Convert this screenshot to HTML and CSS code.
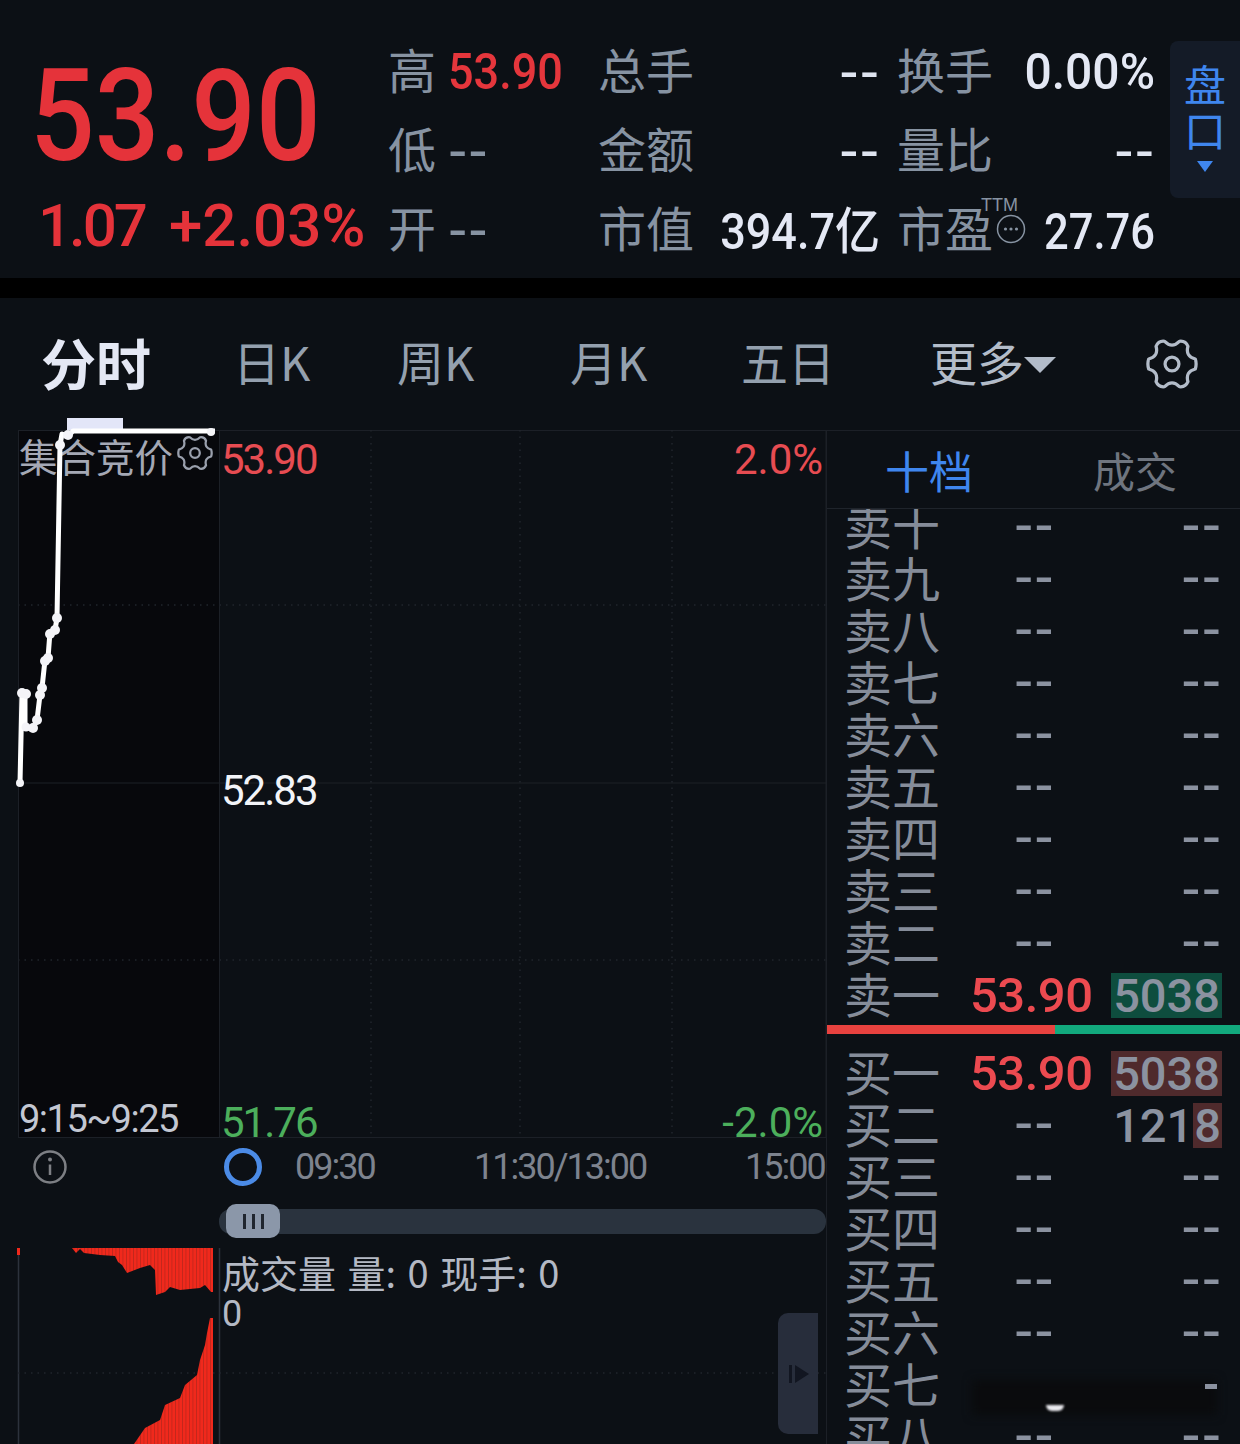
FILE: index.html
```html
<!DOCTYPE html>
<html lang="zh">
<head>
<meta charset="utf-8">
<title>53.90</title>
<link rel="stylesheet" href="styles.css">
</head>
<body>
<div class="page">
  <header class="quote">
    <div class="price">
      <div class="last">53.90</div>
      <div class="change"><span class="chg">1.07</span><span>+2.03%</span></div>
    </div>
    <div class="stats">
      <span class="k">高</span><span class="v sq red">53.90</span>
      <span class="k">总手</span><span class="v r"><span class="dash">--</span></span>
      <span class="k k3">换手</span><span class="v r sq2">0.00%</span>
      <span class="k">低</span><span class="v"><span class="dash grey">--</span></span>
      <span class="k">金额</span><span class="v r"><span class="dash">--</span></span>
      <span class="k k3">量比</span><span class="v r"><span class="dash">--</span></span>
      <span class="k">开</span><span class="v"><span class="dash grey">--</span></span>
      <span class="k">市值</span><span class="v r sq low">394.7亿</span>
      <span class="k k3 pe">市盈<small class="ttm">TTM</small>
        <svg class="more" viewBox="0 0 30 30"><circle cx="15" cy="15" r="13.5"/><circle class="d" cx="9.5" cy="15" r="1.6"/><circle class="d" cx="15" cy="15" r="1.6"/><circle class="d" cx="20.500" cy="15" r="1.6"/></svg>
      </span><span class="v r sq3 low">27.76</span>
    </div>
    <div class="pan">
      <span>盘</span><span>口</span><i class="caret"></i>
    </div>
  </header>
  <div class="gap"></div>
  <nav class="tabs">
    <span class="tab on">分时</span>
    <span class="tab t2">日K</span>
    <span class="tab t3">周K</span>
    <span class="tab t4">月K</span>
    <span class="tab t5">五日</span>
    <span class="tab t6">更多<i class="tcaret"></i></span>
    <svg class="gear big" viewBox="0 0 24 24"><path d="M15.400 1.540Q18.250 1.180 19.360 3.830Q18.060 8.500 22.760 9.710Q23.500 12 22.760 14.290Q18.060 15.500 19.360 20.170Q18.250 22.820 15.400 22.460Q12 19 8.600 22.460Q5.750 22.820 4.640 20.170Q5.940 15.500 1.240 14.290Q.5 12 1.240 9.710Q5.940 8.500 4.640 3.830Q5.750 1.180 8.600 1.540Q12 5 15.400 1.540Z"/><circle cx="12" cy="12" r="3.200"/></svg>
  </nav>
  <main class="main">
    <section class="left">
      <div class="chart">
        <div class="auction"></div>
        <svg class="grid" viewBox="0 0 826 708">
          <line class="g" x1="18" y1="0.500" x2="826" y2="0.500"/>
          <line class="gd" x1="18" y1="175" x2="826" y2="175"/>
          <line class="g" x1="18" y1="353" x2="826" y2="353"/>
          <line class="gd" x1="18" y1="530" x2="826" y2="530"/>
          <line class="g" x1="18" y1="707.500" x2="826" y2="707.500"/>
          <line class="g" x1="18.500" y1="0" x2="18.500" y2="708"/>
          <line class="g" x1="219.500" y1="0" x2="219.500" y2="708"/>
          <line class="gd" x1="371" y1="0" x2="371" y2="708"/>
          <line class="gd" x1="520" y1="0" x2="520" y2="708"/>
          <line class="gd" x1="672" y1="0" x2="672" y2="708"/>
          <line class="g" x1="826" y1="0" x2="826" y2="708"/>
        </svg>
        <div class="blip"></div>
        <span class="lbl auct">集合竞价<svg class="gear small" viewBox="0 0 24 24"><path d="M15.400 1.540Q18.250 1.180 19.360 3.830Q18.060 8.500 22.760 9.710Q23.500 12 22.760 14.290Q18.060 15.500 19.360 20.170Q18.250 22.820 15.400 22.460Q12 19 8.600 22.460Q5.750 22.820 4.640 20.170Q5.940 15.500 1.240 14.290Q.5 12 1.240 9.710Q5.940 8.500 4.640 3.830Q5.750 1.180 8.600 1.540Q12 5 15.400 1.540Z"/><circle cx="12" cy="12" r="3.200"/></svg></span>
        <svg class="line" viewBox="0 0 826 708">
          <polyline points="20,353 22,263 25,263 25,298 33,298 37,290 40,265 42,258 45,230 48,228 50,202 55,200 57,188 60,15 62,4 68,6 73,1 215,1"/>
          <g>
            <circle cx="20" cy="353" r="4"/><circle cx="22" cy="263" r="5"/><circle cx="26" cy="264" r="5"/><circle cx="26" cy="297" r="4.500"/><circle cx="33" cy="298" r="5"/><circle cx="37" cy="290" r="5"/><circle cx="40" cy="265" r="5"/><circle cx="42" cy="258" r="5"/><circle cx="45" cy="231" r="5"/><circle cx="48" cy="228" r="5"/><circle cx="50" cy="204" r="5"/><circle cx="55" cy="200" r="5"/><circle cx="57" cy="188" r="5"/><circle cx="60" cy="15" r="5"/><circle cx="68" cy="5" r="5"/><circle cx="211" cy="2" r="4"/>
          </g>
        </svg>
        <span class="lbl top red2">53.90</span>
        <span class="lbl pct pct-top red2">2.0%</span>
        <span class="lbl mid">52.83</span>
        <span class="lbl time">9:15~9:25</span>
        <span class="lbl bot green">51.76</span>
        <span class="lbl pct pct-bot green">-2.0%</span>
      </div>
      <div class="axis">
        <svg class="info" viewBox="0 0 34 34"><circle cx="17" cy="17" r="15.500"/><line x1="17" y1="14.500" x2="17" y2="25"/><circle class="dot" cx="17" cy="9.500" r="2"/></svg>
        <span class="ring"></span>
        <span class="tm t1">09:30</span>
        <span class="tm t2a">11:30/13:00</span>
        <span class="tm t3a">15:00</span>
      </div>
      <div class="scroll">
        <div class="track"><div class="handle"><i></i><i></i><i></i></div></div>
      </div>
      <div class="vol">
        <svg class="volsvg" viewBox="0 0 826 196">
          <defs>
            <pattern id="bars" width="3.500" height="10" patternUnits="userSpaceOnUse"><rect width="3.500" height="10" fill="#f0291c"/><rect width=".7" height="10" fill="#b3261c"/></pattern>
          </defs>
          <line class="g2" x1="18.500" y1="0" x2="18.500" y2="196"/>
          <line class="g2" x1="219.500" y1="0" x2="219.500" y2="196"/>
          <line class="gd" x1="18" y1="125" x2="826" y2="125"/>
          <rect x="17" y="0" width="3" height="7" fill="#f0291c"/>
          <polygon fill="url(#bars)" points="72,0 76,5 80,1 84,5 100,7 115,8 118,14 122,17 127,25 140,20 150,17 155,22 156,47 165,44 170,39 180,42 200,40 205,37 211,44 213,44 213,0"/>
          <polygon fill="url(#bars)" points="134,196 145,180 160,172 165,157 180,150 185,137 197,127 200,112 205,97 207,85 210,70 213,70 213,196"/>
        </svg>
        <div class="voltext"><span class="vt1">成交量 量: 0 现手: 0</span><span class="vt2">0</span></div>
        <div class="sidebtn"><i class="bar"></i><i class="tri"></i></div>
      </div>
    </section>
    <aside class="book">
      <div class="bookhead"><span class="bt on">十档</span><span class="bt">成交</span></div>
      <div class="rows sells">
        <div class="row"><span class="n">卖十</span><span class="p"><span class="dash">--</span></span><span class="q"><span class="dash">--</span></span></div>
        <div class="row"><span class="n">卖九</span><span class="p"><span class="dash">--</span></span><span class="q"><span class="dash">--</span></span></div>
        <div class="row"><span class="n">卖八</span><span class="p"><span class="dash">--</span></span><span class="q"><span class="dash">--</span></span></div>
        <div class="row"><span class="n">卖七</span><span class="p"><span class="dash">--</span></span><span class="q"><span class="dash">--</span></span></div>
        <div class="row"><span class="n">卖六</span><span class="p"><span class="dash">--</span></span><span class="q"><span class="dash">--</span></span></div>
        <div class="row"><span class="n">卖五</span><span class="p"><span class="dash">--</span></span><span class="q"><span class="dash">--</span></span></div>
        <div class="row"><span class="n">卖四</span><span class="p"><span class="dash">--</span></span><span class="q"><span class="dash">--</span></span></div>
        <div class="row"><span class="n">卖三</span><span class="p"><span class="dash">--</span></span><span class="q"><span class="dash">--</span></span></div>
        <div class="row"><span class="n">卖二</span><span class="p"><span class="dash">--</span></span><span class="q"><span class="dash">--</span></span></div>
        <div class="row"><span class="n">卖一</span><span class="p num">53.90</span><span class="q"><span class="box gbox">5038</span></span></div>
      </div>
      <div class="ratio"><i class="rr"></i><i class="rg"></i></div>
      <div class="rows buys">
        <div class="row"><span class="n">买一</span><span class="p num">53.90</span><span class="q"><span class="box rbox">5038</span></span></div>
        <div class="row"><span class="n">买二</span><span class="p"><span class="dash">--</span></span><span class="q"><span class="plain">121<span class="rbox tail">8</span></span></span></div>
        <div class="row"><span class="n">买三</span><span class="p"><span class="dash">--</span></span><span class="q"><span class="dash">--</span></span></div>
        <div class="row"><span class="n">买四</span><span class="p"><span class="dash">--</span></span><span class="q"><span class="dash">--</span></span></div>
        <div class="row"><span class="n">买五</span><span class="p"><span class="dash">--</span></span><span class="q"><span class="dash">--</span></span></div>
        <div class="row"><span class="n">买六</span><span class="p"><span class="dash">--</span></span><span class="q"><span class="dash">--</span></span></div>
        <div class="row smudged"><span class="n">买七</span><span class="p"></span><span class="q"></span><i class="smudge"></i><i class="arc"></i><i class="frag"></i></div>
        <div class="row"><span class="n">买八</span><span class="p"><span class="dash">--</span></span><span class="q"><span class="dash">--</span></span></div>
      </div>
    </aside>
  </main>
</div>
</body>
</html>
```

FILE: styles.css
```css
* { box-sizing: border-box; }
html, body { margin: 0; padding: 0; background: #0c1015; }
body {
  font-family: Roboto, "Noto Sans CJK SC", sans-serif;
  color: #e4e8f4;
}
.page { width: 1240px; height: 1444px; overflow: hidden; }
.red { color: #e5363c; }
.red2 { color: #e74c52; }
.green { color: #4caf5c; }

/* quote header */
.quote { height: 278px; display: flex; position: relative; }
.price { width: 388px; padding-left: 30px; }
.last {
  font-size: 128px; line-height: 128px; margin-top: 52px; color: #e5333a; font-weight: 500;
  white-space: nowrap; transform: scaleX(.89); transform-origin: left;
}
.change {
  display: flex; gap: 24px; padding-left: 8px; margin-top: 13px; white-space: nowrap;
  font-size: 60px; line-height: 66px; color: #e5333a; font-weight: 500;
}
.chg { letter-spacing: -3px; }
.stats {
  width: 767px; padding-top: 32px;
  display: grid;
  grid-template-columns: 60px 150px 98px 184px 115px 160px;
  grid-auto-rows: 79px;
  align-items: center;
}
.k {
  font: 400 48px/52px "Noto Sans CJK SC", sans-serif; color: #8793a2; white-space: nowrap;
  position: relative; top: -4px;
}
.k3 { padding-left: 17px; }
.v { font-size: 50px; line-height: 52px; white-space: nowrap; font-weight: 500; transform-origin: left; }
.v.r { text-align: right; transform-origin: right; }
.sq { transform: scaleX(.9); }
.sq2 { transform: scaleX(.96); }
.sq3 { transform: scaleX(.87); }
.v.low { position: relative; top: 2px; }
.pe { display: block; }
.ttm {
  position: absolute; left: 101px; top: -5px;
  font: 400 18px/20px "Liberation Sans", sans-serif; color: #8793a2; letter-spacing: 0;
}
.more { position: absolute; left: 116px; top: 14px; width: 30px; height: 30px; fill: none; stroke: #8793a2; stroke-width: 1.500; }
.more .d { fill: #8793a2; stroke: none; }
.dash {
  font: 400 58px/30px "Liberation Sans", sans-serif; color: #dfe4f0;
  display: inline-block; letter-spacing: 1px; vertical-align: middle;
  position: relative; top: -5px;
}
.dash.grey { color: #8793a2; }
.pan {
  position: absolute; left: 1170px; top: 41px; width: 70px; height: 157px;
  background: #141b27; border-radius: 8px 0 0 8px;
  display: flex; flex-direction: column; align-items: center;
  padding-top: 19px;
  font: 400 42px/46px "Noto Sans CJK SC", sans-serif; color: #3f86ee;
}
.caret {
  width: 0; height: 0; margin-top: 9px;
  border-left: 8px solid transparent; border-right: 8px solid transparent; border-top: 11px solid #3f86ee;
}
.gap { height: 20px; background: #000; }

/* tabs */
.tabs { height: 132px; position: relative; }
.tab { position: absolute; top: 33px; font: 400 47px/60px "Noto Sans CJK SC", sans-serif; color: #94a0ae; white-space: nowrap; }
.tab.on { left: 41px; font-size: 55px; font-weight: 700; color: #e4e8f4; }
.t2 { left: 233px; } .t3 { left: 397px; } .t4 { left: 570px; } .t5 { left: 741px; }
.t6 { left: 930px; color: #b3bcc9; }
.tcaret {
  display: inline-block; vertical-align: 8px;
  border-left: 16px solid transparent; border-right: 16px solid transparent; border-top: 16px solid #b3bcc9;
}
.gear { fill: none; stroke: #b3bcc9; stroke-width: 1.500; stroke-linejoin: round; }
.gear.big { position: absolute; left: 1146px; top: 40px; width: 52px; height: 52px; }
.gear.small { position: absolute; left: 158px; top: 3px; width: 36px; height: 36px; stroke: #9aa0ad; }

/* main layout */
.main { display: grid; grid-template-columns: 826px 414px; height: 1014px; }
.left { display: flex; flex-direction: column; }
.chart { height: 708px; position: relative; }
.auction { position: absolute; left: 18px; top: 0; width: 201px; height: 708px; background: #07080c; }
.grid { position: absolute; inset: 0; width: 826px; height: 708px; }
.g { stroke: #1c2027; stroke-width: 1; }
.gd { stroke: #20252c; stroke-width: 1.500; stroke-dasharray: 1.500 5; }
.g2 { stroke: #2c323c; stroke-width: 1.500; }
.blip { position: absolute; left: 67px; top: -12px; width: 56px; height: 12px; background: #e3e6f8; }
.line { position: absolute; inset: 0; width: 826px; height: 708px; overflow: visible; }
.line polyline { fill: none; stroke: #fff; stroke-width: 5; stroke-linejoin: round; }
.line circle { fill: #f4f4f8; }
.lbl { position: absolute; font-size: 42px; line-height: 42px; white-space: nowrap; letter-spacing: -2px; }
.pct { letter-spacing: 0; }
.auct { left: 19px; top: 2px; width: 195px; font: 400 38.500px/46px "Noto Sans CJK SC", sans-serif; letter-spacing: 0; color: #a4a8b5; }
.top { left: 221px; top: 9px; }
.pct-top { right: 3px; top: 9px; }
.mid { left: 221px; top: 340px; color: #f2f4f8; }
.time { left: 19px; top: 668px; font-size: 38px; letter-spacing: -1.500px; color: #c3c7d2; }
.bot { left: 221px; top: 672px; }
.pct-bot { right: 3px; top: 672px; }

.axis { height: 57px; position: relative; }
.info { position: absolute; left: 33px; top: 12px; width: 34px; height: 34px; fill: none; stroke: #7d7f84; stroke-width: 2.500; }
.info .dot { fill: #7d7f84; stroke: none; }
.ring { position: absolute; left: 224px; top: 10px; width: 38px; height: 38px; border: 5px solid #4b8be6; border-radius: 50%; }
.tm { position: absolute; top: 8px; font-size: 36px; line-height: 42px; letter-spacing: -2px; color: #7d838e; white-space: nowrap; }
.t1 { left: 295px; } .t2a { left: 474px; } .t3a { left: 745px; }

.scroll { height: 53px; padding: 14px 0 0 219px; }
.track { height: 25px; background: #2a333e; border-radius: 12px; position: relative; }
.handle {
  position: absolute; left: 7px; top: -5px; width: 54px; height: 34px; border-radius: 10px;
  background: #8b97a9; display: flex; gap: 6px; align-items: center; justify-content: center;
}
.handle i { width: 3px; height: 15px; background: #20262f; }

.vol { height: 196px; position: relative; }
.volsvg { position: absolute; inset: 0; width: 826px; height: 196px; }
.voltext {
  position: absolute; left: 222px; top: 3px; display: flex; flex-direction: column;
  font: 400 38px/42px "Noto Sans CJK SC", sans-serif; color: #b4b9c4; word-spacing: 3px;
}
.vt2 { font-family: Roboto, sans-serif; font-size: 36px; line-height: 38px; padding-top: 2px; }
.sidebtn {
  position: absolute; left: 778px; top: 65px; width: 40px; height: 121px;
  background: #272d3b; border-radius: 10px 0 0 10px;
  display: flex; align-items: center; padding-left: 11px; gap: 3px;
}
.sidebtn .bar { width: 3px; height: 18px; background: #121621; }
.sidebtn .tri { width: 0; height: 0; border-left: 14px solid #121621; border-top: 9px solid transparent; border-bottom: 9px solid transparent; }

/* order book */
.book { border-left: 1px solid #1c2027; overflow: hidden; }
.bookhead {
  height: 79px; position: relative; z-index: 2; background: #0c1015;
  border-bottom: 1px solid #1f242b; border-top: 1px solid #1c2027;
  display: grid; grid-template-columns: 58px 170px 1fr;
  align-items: center;
  font: 400 42px/50px "Noto Sans CJK SC", sans-serif; color: #6f757f;
}
.bt { grid-column: 3; padding-left: 38px; }
.bt.on { grid-column: 2; color: #3f86ee; padding-left: 0; font-size: 44px; }
.sells { margin-top: -7px; }
.row {
  height: 52px; position: relative;
  display: grid; grid-template-columns: 128px 120px 130px; align-items: center;
  padding-left: 17px;
  font-size: 47px; line-height: 52px; color: #8b92a0; font-weight: 500;
}
.n { font: 400 48px/52px "Noto Sans CJK SC", sans-serif; color: #858c99; white-space: nowrap; position: relative; top: -4px; }
.p { padding-left: 42px; }
.p.num { padding-left: 0; margin-left: -2px; color: #ec4a50; font-size: 49px; letter-spacing: -.5px; }
.q { text-align: right; }
.row .dash { color: #8b92a0; top: -9px; }
.box { display: inline-block; height: 45px; line-height: 45px; padding: 0 2px; margin-top: 1px; }
.gbox { background: #0e4d3e; }
.rbox { background: #4f2a2c; }
.plain { display: inline-block; white-space: nowrap; }
.tail { display: inline-block; height: 45px; line-height: 45px; padding: 0 1px; }
.ratio { display: flex; height: 9px; margin-top: 3px; }
.rr { width: 228px; background: #e8423f; }
.rg { flex: 1; background: #12a97d; }
.buys { margin-top: 14px; }
.smudge { position: absolute; left: 145px; top: 20px; width: 245px; height: 35px; background: #0a0b0d; filter: blur(5px); }
.arc { position: absolute; left: 219px; top: 45px; width: 18px; height: 6px; background: #e9e9ee; border-radius: 0 0 9px 9px; filter: blur(1px); }
.frag { position: absolute; left: 378px; top: 24px; width: 12px; height: 5px; background: #8b92a0; filter: blur(.6px); }
```
